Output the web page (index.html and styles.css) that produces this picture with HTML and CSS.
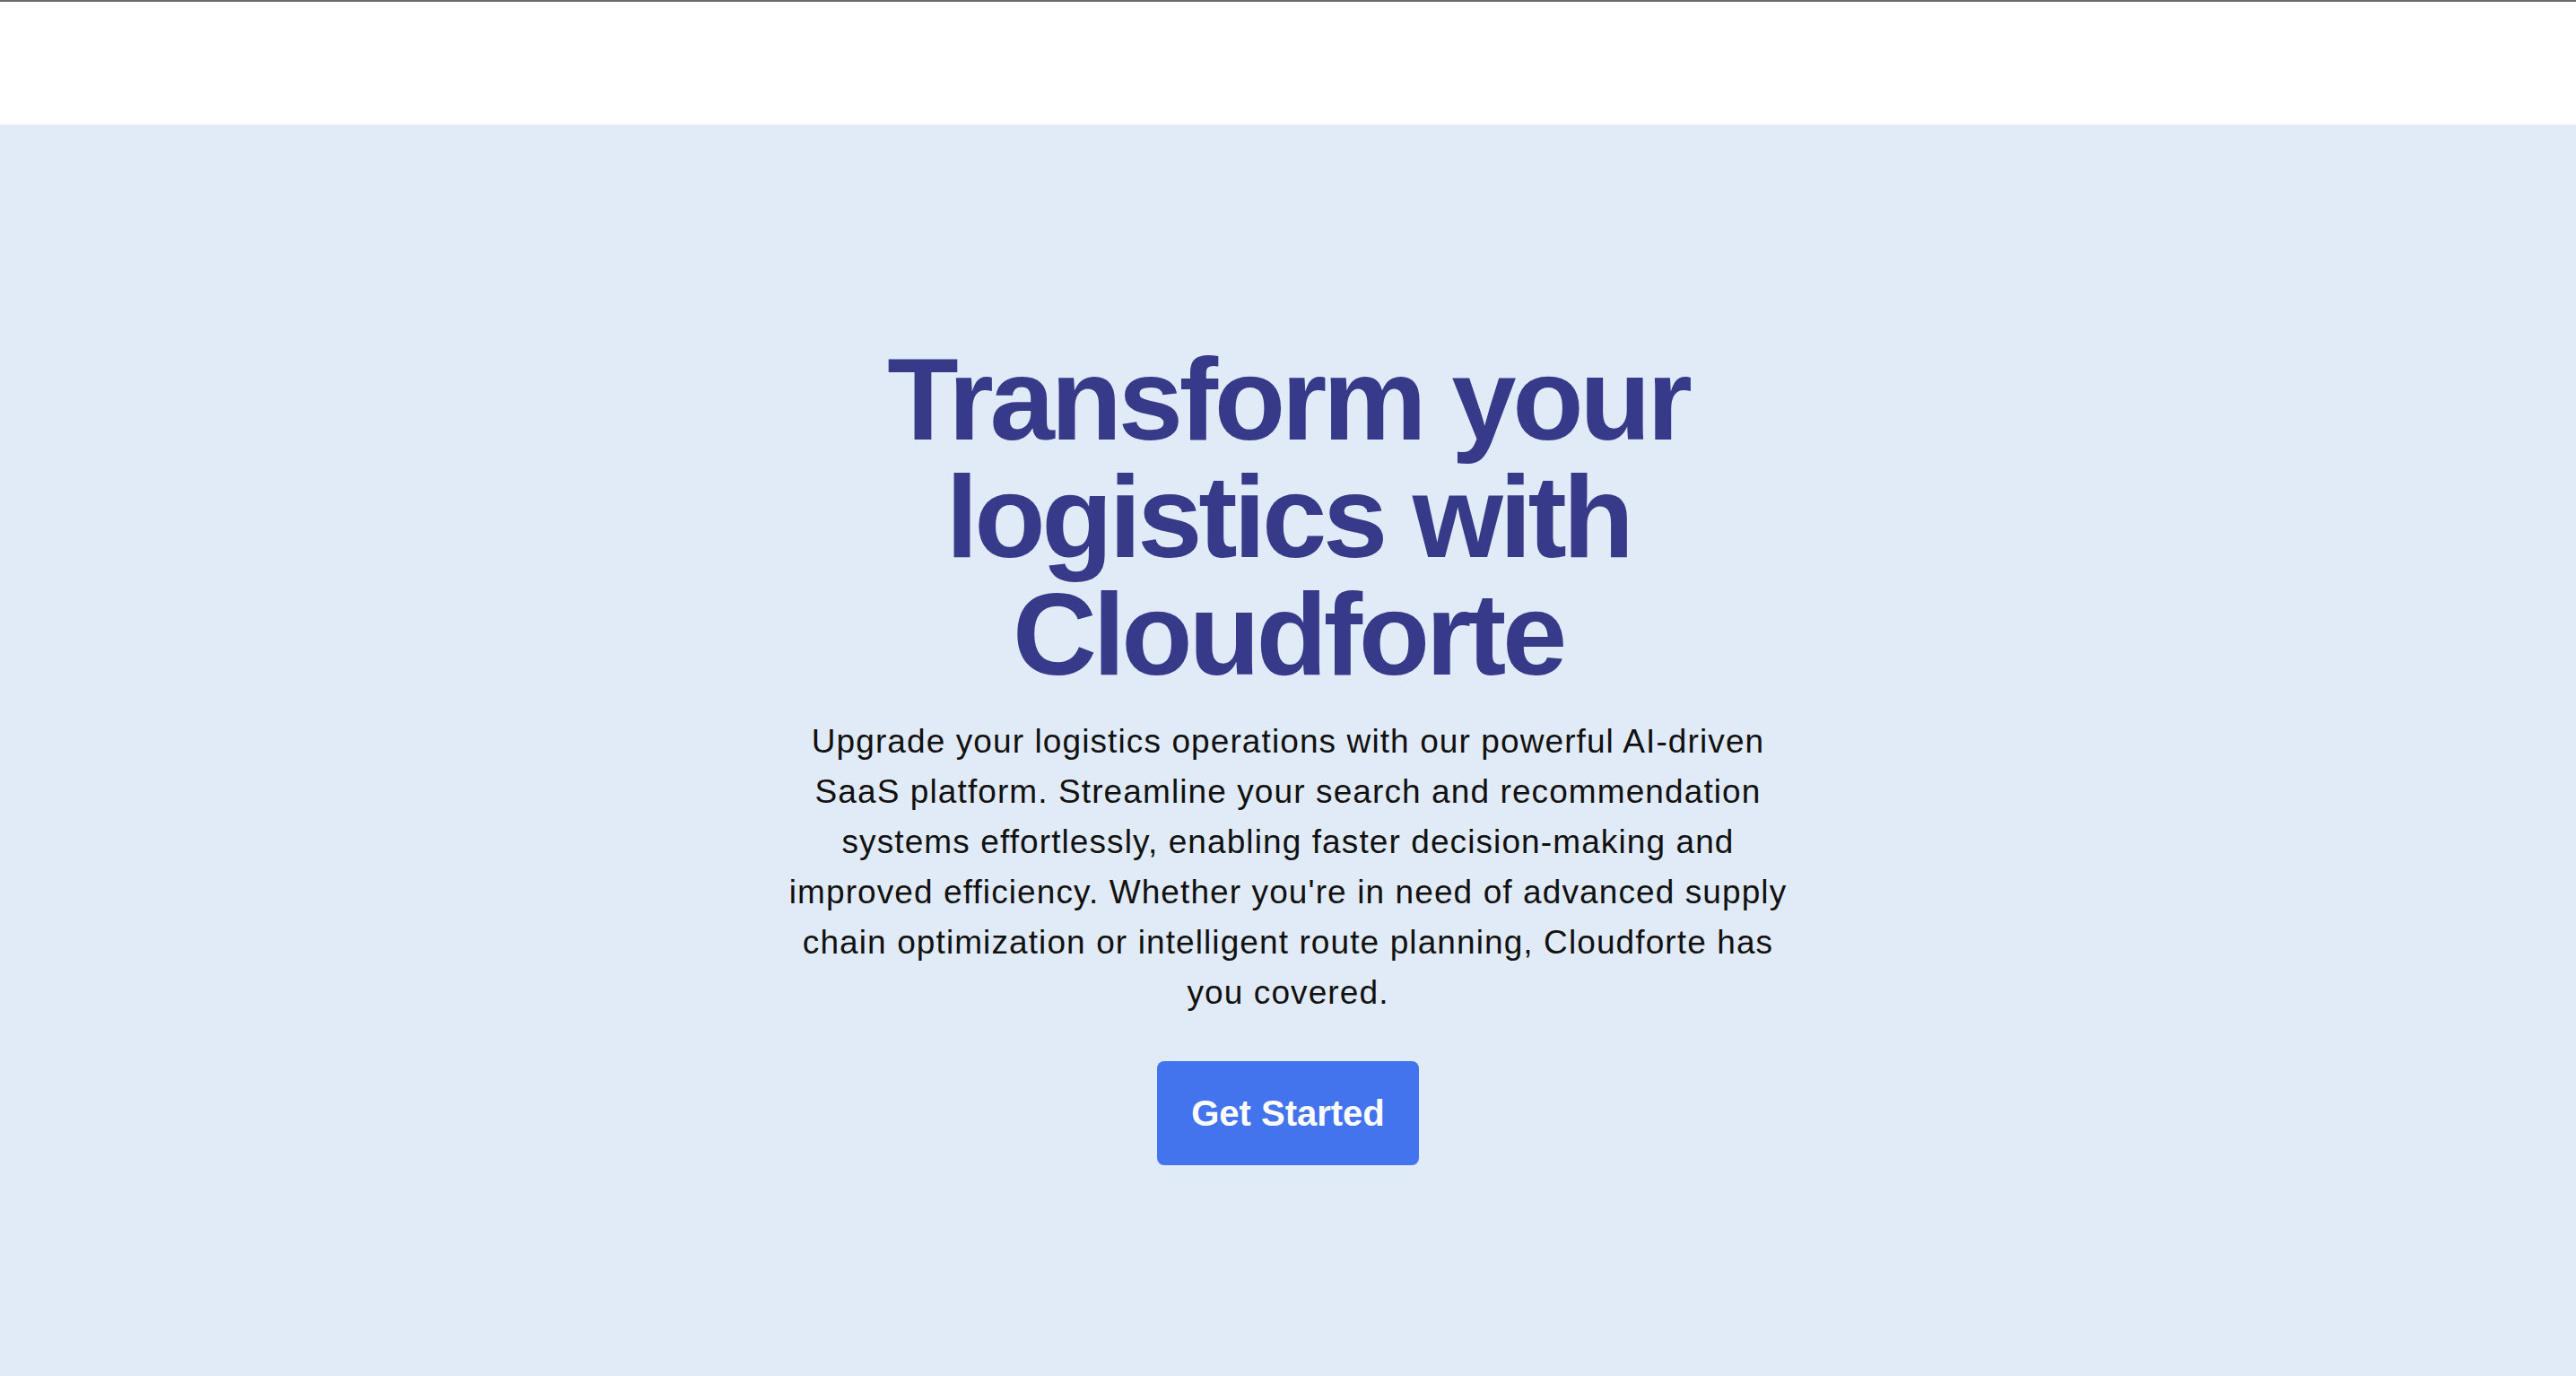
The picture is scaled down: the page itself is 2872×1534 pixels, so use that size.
FILE: index.html
```html
<!DOCTYPE html>
<html lang="en">
<head>
<meta charset="utf-8">
<title>Cloudforte</title>
<link rel="stylesheet" href="styles.css">
</head>
<body>
<header class="topbar"></header>
<main class="hero">
  <div class="hero-inner">
    <h1 class="hero-title">Transform your logistics with Cloudforte</h1>
    <p class="hero-text">Upgrade your logistics operations with our powerful AI-driven SaaS platform. Streamline your search and recommendation systems effortlessly, enabling faster decision-making and improved efficiency. Whether you're in need of advanced supply chain optimization or intelligent route planning, Cloudforte has you covered.</p>
    <a class="btn-primary" href="#">Get Started</a>
  </div>
</main>
</body>
</html>
```

FILE: styles.css
```css
* { box-sizing: border-box; }
html, body { margin: 0; padding: 0; }
body {
  font-family: "Liberation Sans", Arial, sans-serif;
  background: #e1ebf7;
  color: #111;
}
.topbar {
  height: 139px;
  background: #ffffff;
  border-top: 2px solid #6a6a6a;
}
.hero {
  min-height: calc(100vh - 139px);
  padding-top: 6px;
  background: #e1ebf7;
  display: flex;
  align-items: center;
  justify-content: center;
}
.hero-inner {
  width: 1130px;
  display: flex;
  flex-direction: column;
  align-items: center;
  text-align: center;
}
.hero-title {
  margin: 0;
  font-size: 130px;
  line-height: 131px;
  font-weight: 700;
  letter-spacing: -4.3px;
  color: #363a89;
}
.hero-text {
  margin: 26px 0 0;
  font-size: 37px;
  line-height: 56px;
  letter-spacing: 1.1px;
  color: #111;
}
.btn-primary {
  margin-top: 48px;
  display: inline-block;
  background: #4374ee;
  color: #fff;
  text-decoration: none;
  font-weight: 700;
  font-size: 40px;
  line-height: 116px;
  height: 116px;
  padding: 0 38px;
  border-radius: 8px;
}
```
